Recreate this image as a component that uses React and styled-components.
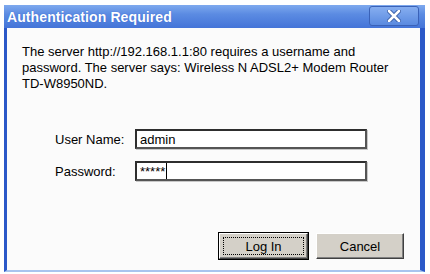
import React from 'react';
import styled, { createGlobalStyle } from 'styled-components';

const GlobalStyle = createGlobalStyle`
  body {
    margin: 0;
    background: #ffffff;
    font-family: 'Liberation Sans', Arial, sans-serif;
  }
`;

const Page = styled.div`
  width: 430px;
  height: 274px;
  padding: 5px 5px 2px 4px;
  box-sizing: border-box;
`;

const Window = styled.div`
  height: 100%;
  display: flex;
  flex-direction: column;
  border-left: 3px solid #2b58c8;
  border-right: 5px solid #2b58c8;
  border-bottom: 2px solid #a9c4ee;
  box-sizing: border-box;
  background: #fbfbfb;
`;

const TitleBar = styled.div`
  height: 23px;
  margin: 0 -5px 0 -3px;
  padding: 0 6px 0 3px;
  display: flex;
  align-items: center;
  justify-content: space-between;
  background: linear-gradient(to bottom, #7ea9ee 0%, #5b8be2 40%, #4474d8 100%);
`;

const Title = styled.span`
  color: #ffffff;
  font-weight: bold;
  font-size: 14px;
  letter-spacing: 0.1px;
  text-shadow: 0 0 1px #2b58c8;
`;

const CloseButton = styled.div`
  width: 48px;
  height: 18px;
  margin-top: -2px;
  border: 1px solid #3a62b8;
  border-radius: 3px;
  background: linear-gradient(to bottom, #86aef0, #5a8ae0);
  display: flex;
  align-items: center;
  justify-content: center;
`;

const Body = styled.div`
  flex: 1;
  display: flex;
  flex-direction: column;
  padding: 16px 16px 11px 15px;
  color: #000;
  font-size: 13px;
`;

const Message = styled.p`
  margin: 0;
  line-height: 16px;
  white-space: nowrap;
`;

const Form = styled.div`
  margin: 37px 0 0 33px;
  display: grid;
  grid-template-columns: 80px 232px;
  row-gap: 12px;
  align-items: center;
`;

const Label = styled.label`
  font-size: 13px;
  white-space: nowrap;
`;

const Field = styled.div`
  height: 20px;
  box-sizing: border-box;
  border: 2px solid #2e2e2e;
  border-right-color: #555;
  border-bottom-color: #555;
  box-shadow: 1px 1px 0 #c8c8c8;
  background: #fff;
  padding: 0 3px;
  display: flex;
  align-items: center;
  font-size: 13px;
`;

const Caret = styled.span`
  width: 1px;
  height: 16px;
  background: #000;
  margin-left: 1px;
`;

const Buttons = styled.div`
  margin-top: auto;
  display: flex;
  justify-content: flex-end;
  gap: 8px;
`;

const Button = styled.div`
  width: ${p => (p.$default ? 89 : 88)}px;
  height: 26px;
  box-sizing: border-box;
  background: #d4d0c8;
  border: 1px solid;
  border-color: #ffffff #404040 #404040 #ffffff;
  box-shadow: inset -1px -1px 0 #808080;
  outline: ${p => (p.$default ? '1px solid #000' : 'none')};
  display: flex;
  align-items: center;
  justify-content: center;
  padding: 3px;
  font-size: 13px;
`;

const Focus = styled.div`
  width: 100%;
  height: 100%;
  border: 1px dotted #000;
  box-sizing: border-box;
  display: flex;
  align-items: center;
  justify-content: center;
`;

export default function App() {
  return (
    <>
      <GlobalStyle />
      <Page>
        <Window>
          <TitleBar>
            <Title>Authentication Required</Title>
            <CloseButton>
              <svg width="14" height="12" viewBox="0 0 14 12">
                <path d="M2 1 L12 11 M12 1 L2 11" stroke="#3a5fa8" strokeWidth="4.5" strokeLinecap="round" />
                <path d="M2 1 L12 11 M12 1 L2 11" stroke="#ffffff" strokeWidth="2.5" strokeLinecap="round" />
              </svg>
            </CloseButton>
          </TitleBar>
          <Body>
            <Message>
              The server http://192.168.1.1:80 requires a username and<br />
              password. The server says: Wireless N ADSL2+ Modem Router<br />
              TD-W8950ND.
            </Message>
            <Form>
              <Label>User Name:</Label>
              <Field>admin</Field>
              <Label>Password:</Label>
              <Field>*****<Caret /></Field>
            </Form>
            <Buttons>
              <Button $default><Focus>Log In</Focus></Button>
              <Button>Cancel</Button>
            </Buttons>
          </Body>
        </Window>
      </Page>
    </>
  );
}
